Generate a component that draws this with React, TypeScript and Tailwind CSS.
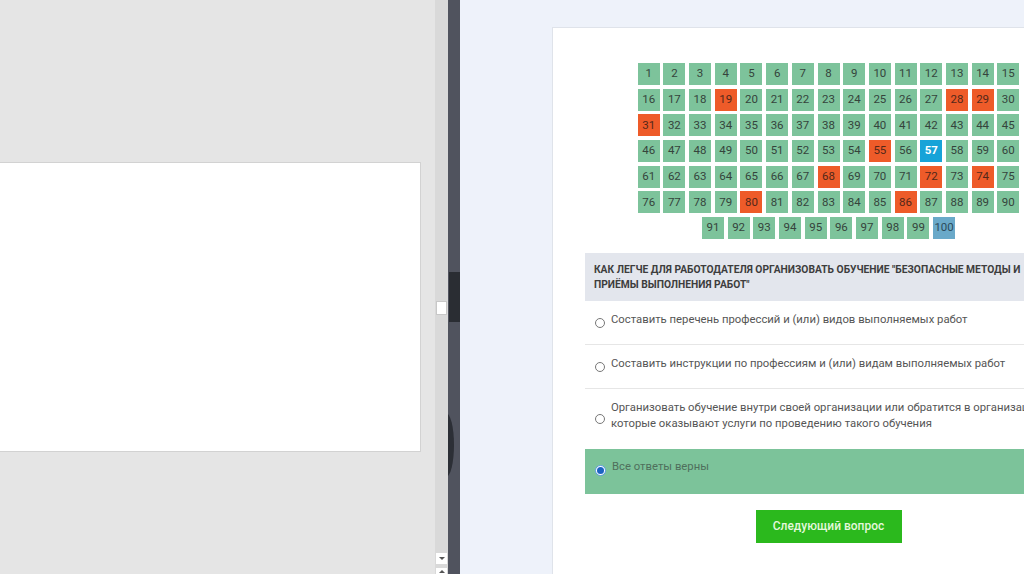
import React from 'react';

const wrong = [19, 28, 29, 31, 55, 68, 72, 74, 80, 86];

function cellClass(n: number) {
  if (n === 57) return 'bg-[#17a3d8] text-white font-bold';
  if (n === 100) return 'bg-[#6aa9c9] text-[#2c4b5b]';
  if (wrong.includes(n)) return 'bg-[#ee5b29] text-[#53281a]';
  return 'bg-[#7dc39b] text-[#35443c]';
}

const answers = [
  { text: ['Составить перечень профессий и (или) видов выполняемых работ'] },
  { text: ['Составить инструкции по профессиям и (или) видам выполняемых работ'] },
  {
    text: [
      'Организовать обучение внутри своей организации или обратится в организации,',
      'которые оказывают услуги по проведению такого обучения',
    ],
  },
];

function Radio({ checked }: { checked?: boolean }) {
  if (checked) {
    return (
      <span className="mt-[6px] flex h-[11px] w-[11px] shrink-0 items-center justify-center rounded-full border border-[#5b9be0] bg-white">
        <span className="h-[7px] w-[7px] rounded-full bg-[#1c63c2]" />
      </span>
    );
  }
  return <span className="mt-[6px] h-[10px] w-[10px] shrink-0 rounded-full border border-[#777] bg-white" />;
}

export default function App() {
  const cells = Array.from({ length: 100 }, (_, i) => i + 1);

  return (
    <div className="flex h-[574px] w-[1024px] overflow-hidden font-['Roboto','Liberation_Sans',sans-serif]">
      {/* slide viewer on the left */}
      <div className="w-[435px] shrink-0 bg-[#e5e5e5]">
        <div className="mt-[162px] h-[290px] w-[421px] border border-l-0 border-[#d2d2d2] bg-white" />
      </div>

      {/* scrollbar */}
      <div className="relative w-[13px] shrink-0 bg-[#d9d9d9]">
        <div className="absolute left-[1px] top-[301px] h-[14px] w-[11px] border border-[#c8c8c8] bg-white" />
        <div className="absolute left-[1px] top-[553px] flex h-[11px] w-[11px] items-center justify-center bg-white">
          <span className="h-0 w-0 border-x-[3px] border-t-[3px] border-x-transparent border-t-[#555]" />
        </div>
        <div className="absolute left-[1px] top-[568px] flex h-[11px] w-[11px] items-start justify-center bg-white pt-[2px]">
          <span className="h-0 w-0 border-x-[3px] border-b-[3px] border-x-transparent border-b-[#555]" />
        </div>
      </div>

      {/* dark divider */}
      <div className="relative w-[12px] shrink-0 overflow-hidden bg-[#50535e]">
        <div className="absolute left-[1px] top-[272px] h-[50px] w-[11px] bg-[#2a2d33]" />
        <div className="absolute left-[-10px] top-[413px] h-[64px] w-[16px] rounded-[50%] bg-[#2c2f36]" />
      </div>

      {/* test page */}
      <div className="flex-1 bg-[#eef2fa] pl-[92px] pt-[27px]">
        <div className="h-[600px] w-[552px] border-l border-t border-[#dfe3ea] bg-white px-[32px] pt-[33px]">
          <div className="mx-auto flex w-[386px] flex-wrap justify-center">
            {cells.map((n) => (
              <div
                key={n}
                className={`m-[1.85px] flex h-[22px] w-[22px] items-center justify-center text-[11.5px] ${cellClass(n)}`}
              >
                {n}
              </div>
            ))}
          </div>

          <div className="mt-[12px] whitespace-nowrap bg-[#e3e6ed] px-[9px] py-[9px] text-[10.25px] font-bold leading-[15px] text-[#3d3d3d]">
            КАК ЛЕГЧЕ ДЛЯ РАБОТОДАТЕЛЯ ОРГАНИЗОВАТЬ ОБУЧЕНИЕ "БЕЗОПАСНЫЕ МЕТОДЫ И
            <br />
            ПРИЁМЫ ВЫПОЛНЕНИЯ РАБОТ"
          </div>

          <div className="text-[11.3px] leading-[16px] text-[#555]">
            {answers.map((a, i) => (
              <div
                key={i}
                className={`flex items-center gap-[6px] pl-[10px] pt-[11px] ${i < 2 ? 'border-b border-[#e6e6e6] pb-[16px]' : 'pb-[17px]'}`}
              >
                <Radio />
                <div className="whitespace-nowrap">
                  {a.text.map((t) => (
                    <div key={t}>{t}</div>
                  ))}
                </div>
              </div>
            ))}
            <div className="flex items-center gap-[6px] bg-[#7cc39a] pb-[18px] pl-[10px] pt-[10px] text-[#4f6f5c]">
              <Radio checked />
              <div>Все ответы верны</div>
            </div>
          </div>

          <div className="mt-[16px] flex justify-center">
            <button className="h-[33px] w-[146px] bg-[#2bb91d] text-[12px] font-medium text-[#e4f8dc]">
              Следующий вопрос
            </button>
          </div>
        </div>
      </div>
    </div>
  );
}
